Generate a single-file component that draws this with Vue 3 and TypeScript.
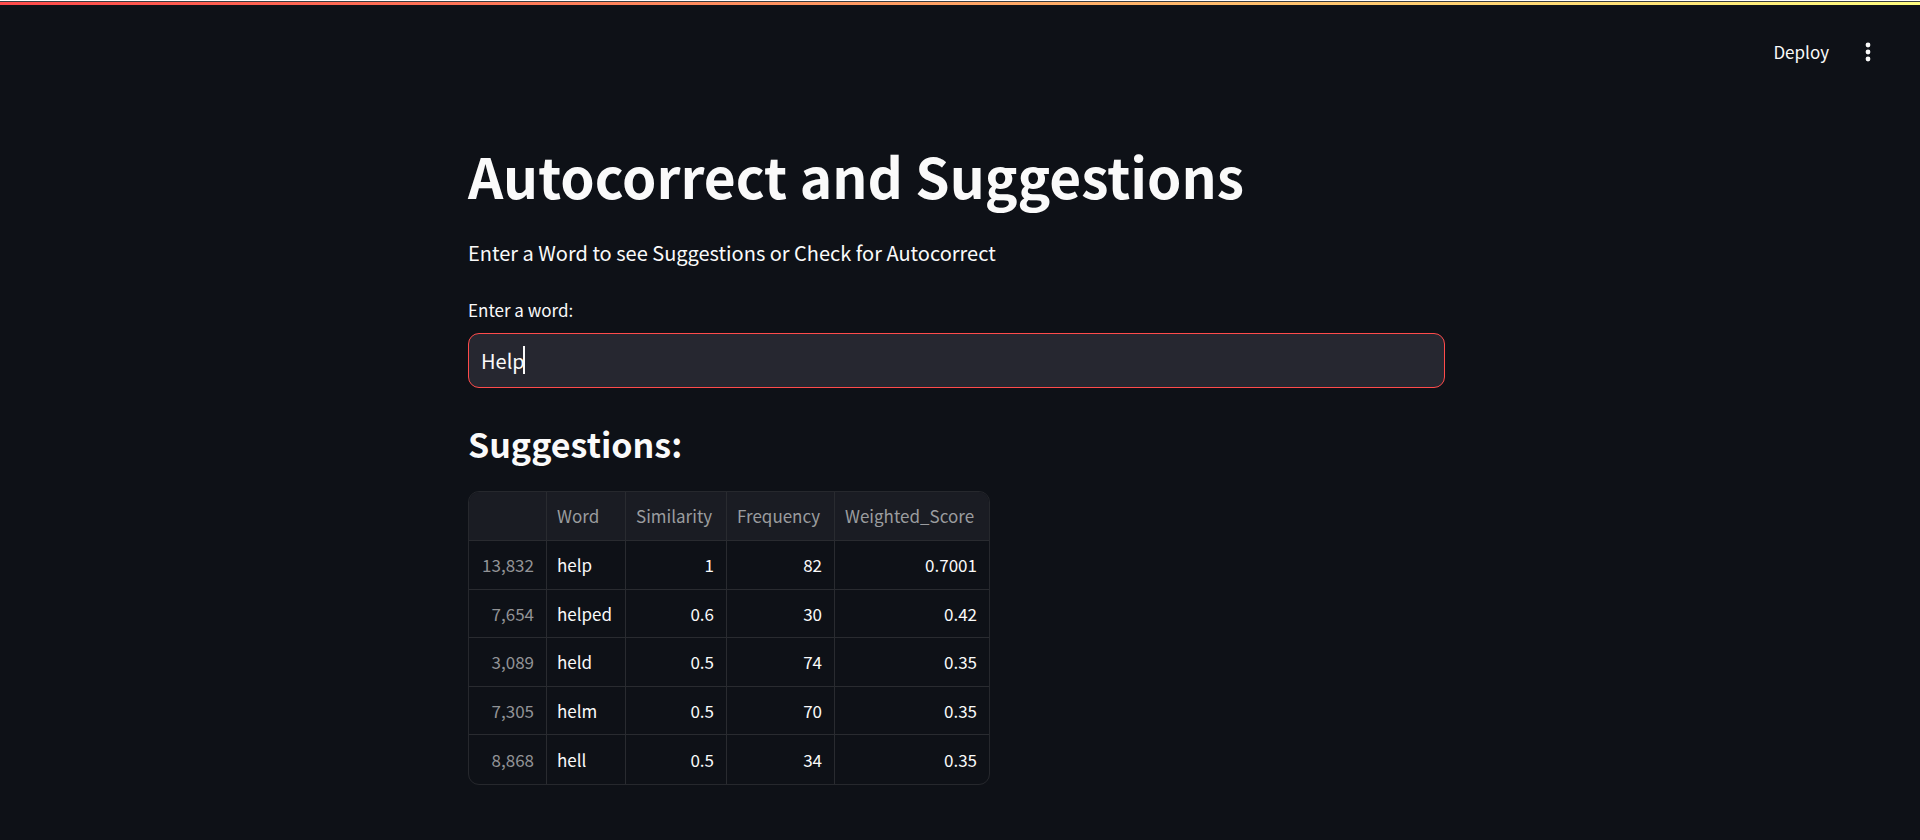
<script setup lang="ts">
import { ref } from 'vue'

interface Suggestion {
  id: string
  word: string
  similarity: string
  frequency: string
  score: string
}

const word = ref<string>('Help')

const suggestions: Suggestion[] = [
  { id: '13,832', word: 'help', similarity: '1', frequency: '82', score: '0.7001' },
  { id: '7,654', word: 'helped', similarity: '0.6', frequency: '30', score: '0.42' },
  { id: '3,089', word: 'held', similarity: '0.5', frequency: '74', score: '0.35' },
  { id: '7,305', word: 'helm', similarity: '0.5', frequency: '70', score: '0.35' },
  { id: '8,868', word: 'hell', similarity: '0.5', frequency: '34', score: '0.35' },
]
</script>

<template>
  <div class="app">
    <div class="decoration"></div>
    <header class="toolbar">
      <button class="deploy" type="button">Deploy</button>
      <button class="menu" type="button" aria-label="Main menu">
        <svg viewBox="0 0 22 22" width="22" height="22" fill="currentColor" aria-hidden="true">
          <circle cx="11" cy="4" r="2.4" />
          <circle cx="11" cy="11" r="2.4" />
          <circle cx="11" cy="18" r="2.4" />
        </svg>
      </button>
    </header>
    <div class="scroll">
      <main class="content">
        <h1>Autocorrect and Suggestions</h1>
        <p class="intro">Enter a Word to see Suggestions or Check for Autocorrect</p>
        <label class="label" for="word">Enter a word:</label>
        <div class="field">
          <input id="word" v-model="word" type="text" autocomplete="off" />
          <span class="caret"></span>
        </div>
        <h2>Suggestions:</h2>
        <div class="frame">
          <table>
            <colgroup>
              <col class="c-id" />
              <col class="c-word" />
              <col class="c-sim" />
              <col class="c-freq" />
              <col class="c-score" />
            </colgroup>
            <thead>
              <tr>
                <th></th>
                <th scope="col">Word</th>
                <th scope="col">Similarity</th>
                <th scope="col">Frequency</th>
                <th scope="col">Weighted_Score</th>
              </tr>
            </thead>
            <tbody>
              <tr v-for="s in suggestions" :key="s.id">
                <td class="num id">{{ s.id }}</td>
                <td>{{ s.word }}</td>
                <td class="num">{{ s.similarity }}</td>
                <td class="num">{{ s.frequency }}</td>
                <td class="num">{{ s.score }}</td>
              </tr>
            </tbody>
          </table>
        </div>
      </main>
    </div>
  </div>
</template>

<style>
body {
  background: #0e1117;
}
</style>

<style scoped>
.app {
  min-height: 100vh;
  box-sizing: border-box;
  border-top: 1px solid #ffffff;
  background: #0e1117;
  color: #fafafa;
  font-family: "Noto Sans CJK SC", "Noto Sans", sans-serif;
  font-size: 20px;
}
.decoration {
  height: 3px;
  border-top: 1px solid #3c4043;
  background: linear-gradient(90deg, #ff4b4b, #fffd80) padding-box;
}
.toolbar {
  display: flex;
  justify-content: flex-end;
  align-items: center;
  gap: 28px;
  padding: 33px 41px 0 0;
}
button {
  border: 0;
  padding: 0;
  background: none;
  color: inherit;
  font-family: inherit;
  font-size: 17px;
  line-height: 28px;
}
.menu {
  display: flex;
}
.scroll {
  padding-right: 7px;
}
.content {
  max-width: 977px;
  margin: 0 auto;
  padding: 73px 0 48px;
}
h1 {
  margin: 0;
  font-size: 55px;
  line-height: 72px;
  font-weight: 700;
}
.intro {
  margin: 24px 0 0;
  line-height: 36px;
}
.label {
  display: block;
  margin-top: 25px;
  font-size: 17px;
  line-height: 28px;
}
.field {
  position: relative;
  margin-top: 9px;
}
input {
  display: block;
  box-sizing: border-box;
  width: 100%;
  height: 55px;
  padding: 0 12px 1px;
  border: 1px solid #ff4b4b;
  border-radius: 11px;
  outline: 0;
  background: #262730;
  color: inherit;
  font-family: inherit;
  font-size: 20px;
  caret-color: transparent;
}
.caret {
  position: absolute;
  left: 55px;
  top: 13px;
  width: 2px;
  height: 28px;
  background: #fafafa;
}
h2 {
  margin: 33px 0 0;
  font-size: 34px;
  line-height: 46px;
  font-weight: 600;
}
.frame {
  width: fit-content;
  margin-top: 24px;
  border: 1px solid #26282d;
  border-radius: 11px;
  overflow: hidden;
}
table {
  table-layout: fixed;
  width: 520px;
  border-collapse: separate;
  border-spacing: 0;
  font-size: 17px;
  line-height: 24px;
}
.c-id {
  width: 78px;
}
.c-word {
  width: 79px;
}
.c-sim {
  width: 101px;
}
.c-freq {
  width: 108px;
}
th,
td {
  box-sizing: border-box;
  height: 49px;
  padding: 0 11px 0 10px;
  border-right: 1px solid #292b30;
  border-bottom: 1px solid #292b30;
  text-align: left;
  font-weight: 400;
}
th {
  background: #1a1c23;
  color: #9b9c9f;
}
tr:nth-child(even) td {
  height: 48px;
}
th:last-child,
td:last-child {
  border-right: 0;
}
tr:last-child td {
  border-bottom: 0;
}
td.num {
  padding-right: 12px;
  text-align: right;
}
td.id {
  color: #929396;
}
</style>
